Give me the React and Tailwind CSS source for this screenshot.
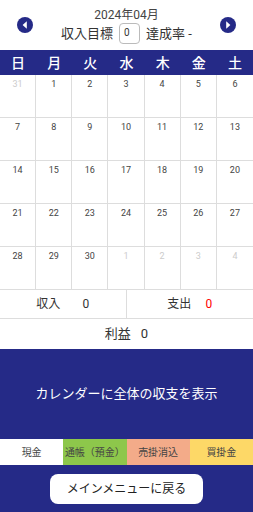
const DAYS = ["日", "月", "火", "水", "木", "金", "土"];

const weeks = [
  [[31, true], [1], [2], [3], [4], [5], [6]],
  [[7], [8], [9], [10], [11], [12], [13]],
  [[14], [15], [16], [17], [18], [19], [20]],
  [[21], [22], [23], [24], [25], [26], [27]],
  [[28], [29], [30], [1, true], [2, true], [3, true], [4, true]],
];

const legend = [
  { label: "現金", bg: "bg-white" },
  { label: "通帳（預金）", bg: "bg-[#8dc74b]" },
  { label: "売掛消込", bg: "bg-[#f3ab89]" },
  { label: "買掛金", bg: "bg-[#fdd867]" },
];

const Arrow = ({ dir }) => (
  <svg width="16" height="16" viewBox="0 0 16 16">
    <circle cx="8" cy="8" r="8" fill="#252a87" />
    {dir === "left" ? (
      <path d="M9.8 4.2 L5.6 8 L9.8 11.8 Z" fill="#fff" />
    ) : (
      <path d="M6.2 4.2 L10.4 8 L6.2 11.8 Z" fill="#fff" />
    )}
  </svg>
);

export default function App() {
  return (
    <div
      className="w-[253px] h-[512px] flex flex-col bg-white overflow-hidden"
      style={{ fontFamily: 'Roboto, "Noto Sans CJK JP", sans-serif' }}
    >
      <div className="h-[50px] flex items-center justify-between px-[17px]">
        <Arrow dir="left" />
        <div className="flex flex-col items-center text-[#333]">
          <div className="text-[12px] leading-[14px] mt-[1px] text-[#444]">2024年04月</div>
          <div className="flex items-center gap-[6px] text-[13px] leading-none mt-[1px]">
            <span>収入目標</span>
            <div className="w-[21px] h-[21px] border border-[#bbb] rounded-[4px] text-[10px] flex items-center pl-[4px]">
              0
            </div>
            <span>達成率 -</span>
          </div>
        </div>
        <Arrow dir="right" />
      </div>

      <div className="h-[25px] bg-[#252a87] grid grid-cols-7 items-center text-white text-[14px] font-medium">
        {DAYS.map((d) => (
          <div key={d} className="text-center leading-none">
            {d}
          </div>
        ))}
      </div>

      <div className="flex flex-col">
        {weeks.map((week, i) => (
          <div key={i} className="grid grid-cols-7 h-[43px] border-b border-[#ddd]">
            {week.map(([n, faded], j) => (
              <div
                key={j}
                className={`text-center text-[9px] pt-[3px] leading-[12px] ${
                  j < 6 ? "border-r border-[#ddd]" : ""
                } ${faded ? "text-[#ccc]" : "text-[#444]"}`}
              >
                {n}
              </div>
            ))}
          </div>
        ))}
      </div>

      <div className="h-[29px] grid grid-cols-2 border-b border-[#ddd] text-[12px] text-[#333]">
        <div className="flex items-center justify-center gap-[22px] border-r border-[#ddd]">
          <span>収入</span>
          <span>0</span>
        </div>
        <div className="flex items-center justify-center gap-[14px]">
          <span>支出</span>
          <span className="text-[#f00]">0</span>
        </div>
      </div>

      <div className="h-[30px] flex items-center justify-center gap-[10px] text-[13px] text-[#333]">
        <span>利益</span>
        <span>0</span>
      </div>

      <div className="flex-1 bg-[#252a87] flex flex-col">
        <div className="h-[90px] flex items-center justify-center text-white text-[13px]">
          カレンダーに全体の収支を表示
        </div>
        <div className="h-[26px] grid grid-cols-4 text-[10px] text-[#444]">
          {legend.map((l) => (
            <div key={l.label} className={`${l.bg} flex items-center justify-center`}>
              {l.label}
            </div>
          ))}
        </div>
        <div className="flex-1 flex items-center justify-center">
          <button className="w-[153px] h-[30px] bg-white rounded-[8px] text-[12px] text-[#222]">
            メインメニューに戻る
          </button>
        </div>
      </div>
    </div>
  );
}
